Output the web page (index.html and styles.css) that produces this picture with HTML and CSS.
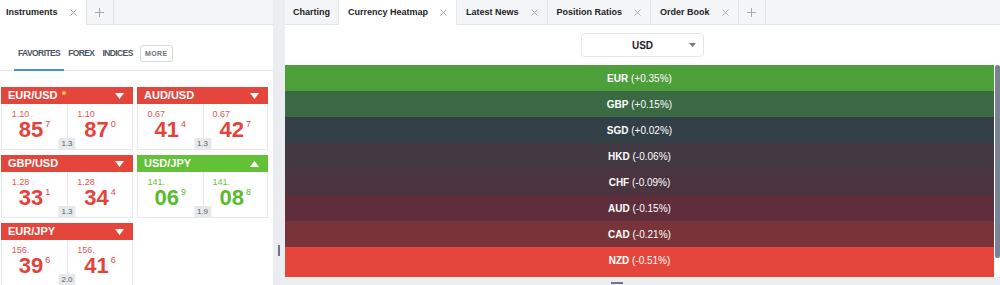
FILE: index.html
```html
<!DOCTYPE html>
<html lang="en">
<head>
<meta charset="utf-8">
<title>Currency Heatmap</title>
<link rel="stylesheet" href="styles.css">
</head>
<body>
<div class="app">
  <section class="panel panel-left">
    <div class="tabbar">
      <div class="tab tab-active tab-first">Instruments
        <svg class="close" width="7" height="7" viewBox="0 0 7 7"><path d="M0.5 0.5L6.5 6.5M6.5 0.5L0.5 6.5"/></svg>
      </div>
      <div class="tab tab-add">
        <svg class="plus" width="9" height="9" viewBox="0 0 9 9"><path d="M4.5 0V9M0 4.5H9"/></svg>
      </div>
      <div class="tab-fill"></div>
    </div>

    <nav class="filters">
      <a class="ftab ftab-active">FAVORITES</a>
      <a class="ftab">FOREX</a>
      <a class="ftab">INDICES</a>
      <span class="more">MORE</span>
    </nav>

    <div class="cards">
      <div class="card card-down">
        <div class="card-head"><span class="pair">EUR/USD</span><span class="dot"></span>
          <svg class="dir" width="9" height="6" viewBox="0 0 9 6"><path d="M0 0H9L4.5 6Z"/></svg></div>
        <div class="card-body">
          <div class="quote"><div class="q"><div class="lbl">1.10</div><div class="num">85<span class="pip">7</span></div></div></div>
          <div class="quote"><div class="q"><div class="lbl">1.10</div><div class="num">87<span class="pip">0</span></div></div></div>
          <span class="spread">1.3</span>
        </div>
      </div>
      <div class="card card-down">
        <div class="card-head"><span class="pair">AUD/USD</span>
          <svg class="dir" width="9" height="6" viewBox="0 0 9 6"><path d="M0 0H9L4.5 6Z"/></svg></div>
        <div class="card-body">
          <div class="quote"><div class="q"><div class="lbl">0.67</div><div class="num">41<span class="pip">4</span></div></div></div>
          <div class="quote"><div class="q"><div class="lbl">0.67</div><div class="num">42<span class="pip">7</span></div></div></div>
          <span class="spread">1.3</span>
        </div>
      </div>
      <div class="card card-down">
        <div class="card-head"><span class="pair">GBP/USD</span>
          <svg class="dir" width="9" height="6" viewBox="0 0 9 6"><path d="M0 0H9L4.5 6Z"/></svg></div>
        <div class="card-body">
          <div class="quote"><div class="q"><div class="lbl">1.28</div><div class="num">33<span class="pip">1</span></div></div></div>
          <div class="quote"><div class="q"><div class="lbl">1.28</div><div class="num">34<span class="pip">4</span></div></div></div>
          <span class="spread">1.3</span>
        </div>
      </div>
      <div class="card card-up">
        <div class="card-head"><span class="pair">USD/JPY</span>
          <svg class="dir" width="9" height="6" viewBox="0 0 9 6"><path d="M0 6H9L4.5 0Z"/></svg></div>
        <div class="card-body">
          <div class="quote"><div class="q"><div class="lbl">141.</div><div class="num">06<span class="pip">9</span></div></div></div>
          <div class="quote"><div class="q"><div class="lbl">141.</div><div class="num">08<span class="pip">8</span></div></div></div>
          <span class="spread">1.9</span>
        </div>
      </div>
      <div class="card card-down">
        <div class="card-head"><span class="pair">EUR/JPY</span>
          <svg class="dir" width="9" height="6" viewBox="0 0 9 6"><path d="M0 0H9L4.5 6Z"/></svg></div>
        <div class="card-body">
          <div class="quote"><div class="q"><div class="lbl">156.</div><div class="num">39<span class="pip">6</span></div></div></div>
          <div class="quote"><div class="q"><div class="lbl">156.</div><div class="num">41<span class="pip">6</span></div></div></div>
          <span class="spread">2.0</span>
        </div>
      </div>
    </div>
  </section>

  <div class="splitter"><span class="grip"></span></div>

  <section class="panel panel-right">
    <div class="tabbar">
      <div class="tab tab-plain">Charting</div>
      <div class="tab tab-active">Currency Heatmap
        <svg class="close" width="7" height="7" viewBox="0 0 7 7"><path d="M0.5 0.5L6.5 6.5M6.5 0.5L0.5 6.5"/></svg></div>
      <div class="tab">Latest News
        <svg class="close" width="7" height="7" viewBox="0 0 7 7"><path d="M0.5 0.5L6.5 6.5M6.5 0.5L0.5 6.5"/></svg></div>
      <div class="tab">Position Ratios
        <svg class="close" width="7" height="7" viewBox="0 0 7 7"><path d="M0.5 0.5L6.5 6.5M6.5 0.5L0.5 6.5"/></svg></div>
      <div class="tab">Order Book
        <svg class="close" width="7" height="7" viewBox="0 0 7 7"><path d="M0.5 0.5L6.5 6.5M6.5 0.5L0.5 6.5"/></svg></div>
      <div class="tab tab-add">
        <svg class="plus" width="9" height="9" viewBox="0 0 9 9"><path d="M4.5 0V9M0 4.5H9"/></svg>
      </div>
      <div class="tab-fill"></div>
    </div>

    <div class="heatmap">
      <div class="toolbar">
        <div class="select">
          <span class="select-val">USD</span>
          <svg class="caret" width="7" height="4" viewBox="0 0 7 4"><path d="M0 0H7L3.5 4Z"/></svg>
        </div>
      </div>
      <div class="heat-scroll">
        <div class="heat-rows">
          <div class="heat-row h-eur"><b>EUR</b>&nbsp;(+0.35%)</div>
          <div class="heat-row h-gbp"><b>GBP</b>&nbsp;(+0.15%)</div>
          <div class="heat-row h-sgd"><b>SGD</b>&nbsp;(+0.02%)</div>
          <div class="heat-row h-hkd"><b>HKD</b>&nbsp;(-0.06%)</div>
          <div class="heat-row h-chf"><b>CHF</b>&nbsp;(-0.09%)</div>
          <div class="heat-row h-aud"><b>AUD</b>&nbsp;(-0.15%)</div>
          <div class="heat-row h-cad"><b>CAD</b>&nbsp;(-0.21%)</div>
          <div class="heat-row h-nzd"><b>NZD</b>&nbsp;(-0.51%)</div>
        </div>
        <div class="scrollbar"><span class="thumb"></span></div>
      </div>
    </div>
    <div class="hsplit"><span class="hgrip"></span></div>
  </section>
</div>
</body>
</html>
```

FILE: styles.css
```css
* { box-sizing: border-box; }

html, body {
  margin: 0;
  padding: 0;
  width: 1000px;
  height: 285px;
  overflow: hidden;
  background: #ffffff;
  font-family: "Liberation Sans", Arial, sans-serif;
  color: #1f2328;
}

.app {
  display: flex;
  height: 285px;
}

.panel {
  display: flex;
  flex-direction: column;
  min-width: 0;
  background: #ffffff;
}

.panel-left { width: 273px; overflow: hidden; }
.panel-right { flex: 1; }

/* ---------- tab bars ---------- */
.tabbar {
  display: flex;
  height: 25px;
  flex: none;
  background: #f4f5f7;
}

.tab {
  display: flex;
  align-items: center;
  gap: 12px;
  padding: 0 9px 0 9px;
  font-size: 9px;
  font-weight: bold;
  color: #1e2226;
  white-space: nowrap;
  border-right: 1px solid #e2e5e9;
  border-bottom: 1px solid #e2e5e9;
}

.tab-first { padding-left: 6px; gap: 12px; }
.tab-plain { padding: 0 8px; }

.tab-active {
  background: #ffffff;
  border-bottom-color: #ffffff;
}

.tab-add {
  width: 27px;
  padding: 0;
  justify-content: center;
}

.tab-fill {
  flex: 1;
  border-bottom: 1px solid #e2e5e9;
}

.close path, .plus path {
  stroke: #a3a9b1;
  stroke-width: 1;
  fill: none;
}

/* ---------- filters ---------- */
.filters {
  display: flex;
  align-items: stretch;
  height: 46px;
  padding-left: 14px;
  border-bottom: 1px solid #e6e8eb;
  flex: none;
}

.ftab {
  display: flex;
  align-items: center;
  padding: 11px 4px 0;
  margin-bottom: -1px;
  border-bottom: 2px solid transparent;
  font-size: 8.5px;
  font-weight: bold;
  letter-spacing: -0.6px;
  color: #4c5562;
}

.ftab-active { border-bottom-color: #4a8fd8; }

.more {
  align-self: center;
  margin: 11px 0 0 3px;
  width: 33px;
  height: 17px;
  border: 1px solid #d3d7dc;
  border-radius: 3px;
  display: flex;
  align-items: center;
  justify-content: center;
  font-size: 7px;
  font-weight: bold;
  letter-spacing: 0.4px;
  color: #6a727d;
}

/* ---------- cards ---------- */
.cards {
  display: grid;
  grid-template-columns: 132px 131px;
  column-gap: 4px;
  row-gap: 5px;
  padding: 16px 0 0 1px;
}

.card { height: 63px; display: flex; flex-direction: column; }

.card-head {
  height: 17px;
  flex: none;
  display: flex;
  align-items: center;
  padding: 0 9px 0 7px;
  color: #ffffff;
  font-size: 11px;
  font-weight: bold;
}

.card-down .card-head { background: #e5463c; }
.card-up .card-head { background: #62c136; }

.pair { line-height: 17px; }

.dot {
  width: 4px;
  height: 4px;
  border-radius: 50%;
  background: #f7c545;
  margin: -5px 0 0 4px;
}

.dir { margin-left: auto; }
.dir path { fill: #ffffff; }

.card-body {
  position: relative;
  flex: 1;
  display: grid;
  grid-template-columns: 1fr 1fr;
  border: 1px solid #e6e8eb;
  border-top: none;
}

.quote {
  display: flex;
  justify-content: center;
  padding-top: 5px;
}

.quote + .quote { border-left: 1px solid #e6e8eb; }

.card-down .quote { color: #e3433a; }
.card-up .quote { color: #5bbb2f; }

.card-down .lbl { color: #e4574e; }
.card-up .lbl { color: #6cc145; }

.lbl {
  font-size: 9px;
  line-height: 10px;
  margin-left: -7px;
}

.num {
  font-size: 22px;
  font-weight: bold;
  line-height: 22px;
  white-space: nowrap;
}

.pip {
  font-size: 9px;
  font-weight: normal;
  line-height: 10px;
  vertical-align: top;
  margin-left: 2px;
}

.spread {
  position: absolute;
  bottom: 0;
  left: 50%;
  transform: translateX(-50%);
  height: 11px;
  padding: 0 3px;
  background: #e7e8ea;
  color: #5b5f66;
  font-size: 8px;
  line-height: 11px;
}

/* ---------- splitter ---------- */
.splitter {
  width: 12px;
  flex: none;
  background: #ebedf0;
  display: flex;
  flex-direction: column;
  justify-content: flex-end;
  align-items: center;
  padding-bottom: 29px;
}

.grip {
  width: 2px;
  height: 11px;
  background: #6f7682;
}

/* ---------- heatmap ---------- */
.heatmap {
  flex: 1;
  display: flex;
  flex-direction: column;
  min-height: 0;
}

.toolbar {
  height: 40px;
  flex: none;
  display: flex;
  align-items: center;
  justify-content: center;
}

.select {
  width: 123px;
  height: 24px;
  border: 1px solid #e3e6ea;
  border-radius: 4px;
  display: grid;
  grid-template-columns: 1fr auto 1fr;
  align-items: center;
  background: #ffffff;
}

.select-val {
  grid-column: 2;
  font-size: 10px;
  font-weight: bold;
  color: #1e2226;
}

.caret {
  grid-column: 3;
  justify-self: end;
  margin-right: 7px;
}
.caret path { fill: #6f7682; }

.heat-scroll {
  flex: 1;
  display: flex;
  min-height: 0;
}

.heat-rows {
  flex: 1;
  display: flex;
  flex-direction: column;
}

.heat-row {
  height: 26px;
  display: flex;
  align-items: center;
  justify-content: center;
  color: #ffffff;
  font-size: 10px;
}

.heat-row b { font-weight: bold; }

.h-eur { background: #4d9f3a; }
.h-gbp { background: #3a6944; }
.h-sgd { background: #323f47; }
.h-hkd { background: #433943; }
.h-chf { background: #4a3440; }
.h-aud { background: #5e2f3b; }
.h-cad { background: #793439; }
.h-nzd { background: #e5463c; flex: 1; padding-bottom: 3px; }

.scrollbar {
  width: 6px;
  flex: none;
  background: #ffffff;
  padding-left: 0.5px;
}

.thumb {
  display: block;
  width: 5px;
  height: 193px;
  border-radius: 2px;
  background: #7a8392;
}

.hsplit {
  height: 8px;
  flex: none;
  background: #ebedf0;
  display: flex;
  justify-content: center;
  align-items: flex-end;
  padding-bottom: 1px;
}

.hgrip {
  width: 12px;
  height: 2px;
  background: #6f7682;
  margin-left: -52px;
}
```
